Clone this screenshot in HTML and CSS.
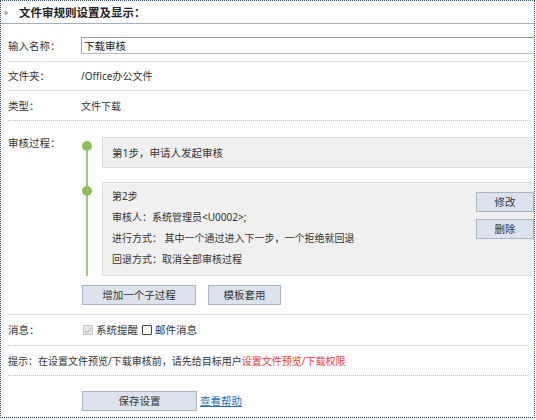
FILE: index.html
```html
<!DOCTYPE html>
<html lang="zh-CN">
<head>
<meta charset="utf-8">
<title>文件审规则设置及显示</title>
<link rel="stylesheet" href="styles.css">
</head>
<body>
<div class="panel">
  <div class="head"><span class="bullet"></span><h1 class="title">文件审规则设置及显示：</h1></div>

  <div class="row r-input">
    <div class="label">输入名称：</div>
    <div class="val"><input class="name" type="text" value="下载审核"></div>
  </div>

  <div class="row r-folder">
    <div class="label">文件夹：</div>
    <div class="val">/Office办公文件</div>
  </div>

  <div class="row r-type">
    <div class="label">类型：</div>
    <div class="val">文件下载</div>
  </div>

  <div class="row r-proc">
    <div class="label">审核过程：</div>
    <div class="val">
      <div class="steps">
        <div class="step">
          <span class="dot"></span>
          <div class="box box1">第1步，申请人发起审核</div>
        </div>
        <div class="step">
          <span class="dot"></span>
          <div class="box box2">
            <div class="info">
              <div>第2步</div>
              <div>审核人：系统管理员&lt;U0002&gt;;</div>
              <div>进行方式： 其中一个通过进入下一步，一个拒绝就回退</div>
              <div>回退方式：取消全部审核过程</div>
            </div>
            <div class="ops">
              <button class="btn b-op" type="button">修改</button>
              <button class="btn b-op" type="button">删除</button>
            </div>
          </div>
        </div>
      </div>
      <div class="acts">
        <button class="btn b-add" type="button">增加一个子过程</button>
        <button class="btn b-tpl" type="button">模板套用</button>
      </div>
    </div>
  </div>

  <div class="row r-msg">
    <div class="label">消息：</div>
    <div class="val checks">
      <label class="chk"><span class="cb cb-on"></span>系统提醒</label>
      <label class="chk"><span class="cb"></span>邮件消息</label>
    </div>
  </div>

  <div class="row r-tip">
    <div class="tip">提示：在设置文件预览/下载审核前，请先给目标用户<a class="red" href="#">设置文件预览/下载权限</a></div>
  </div>

  <div class="row r-save">
    <div class="label"></div>
    <div class="val save">
      <button class="btn b-save" type="button">保存设置</button>
      <a class="help" href="#">查看帮助</a>
    </div>
  </div>
</div>
</body>
</html>
```

FILE: styles.css
```css
* { box-sizing: border-box; }
html, body { margin: 0; padding: 0; background: #fff; }
body {
  font-family: "Noto Sans", "Noto Sans CJK SC", sans-serif;
  font-size: 10px;
  line-height: 14px;
  color: #333;
}
.panel {
  width: 535px;
  height: 418px;
  border: 1px dotted #3d5269;
  overflow: hidden;
}
.head {
  height: 23px;
  border-bottom: 1px solid #a3b0bc;
  display: flex;
  align-items: center;
  padding: 1px 0 0 3px;
}
.bullet {
  width: 4px;
  height: 4px;
  border-radius: 50%;
  background: #b4b4b4;
  margin-right: 11px;
}
.title {
  margin: 0;
  font-size: 11.5px;
  font-weight: bold;
  color: #222;
  line-height: 14px;
}
.row {
  display: grid;
  grid-template-columns: 73px 1fr;
  align-items: center;
  margin: 0 4px 0 7px;
  border-bottom: 1px dotted #c4c4c4;
}
.label { color: #333; font-size: 10.5px; }
.r-input { height: 38px; padding: 13px 0 7px; }
.r-folder { height: 29px; }
.r-type { height: 30px; }
.r-proc { height: 194px; align-items: start; }
.r-proc .label { padding-top: 15px; }
.r-proc .val { padding-top: 16px; }
.r-msg { height: 31px; }
.r-tip { height: 30px; display: flex; }
.r-save { height: 41px; border-bottom: none; align-items: start; }
.r-save .val { padding-top: 15px; }

.name {
  display: block;
  width: calc(100% + 10px);
  height: 17px;
  margin: 0;
  padding: 0 0 0 2px;
  border: 1px solid #bdbdbd;
  border-top-color: #9a9a9a;
  border-left-color: #a8a8a8;
  font: inherit;
  font-size: 10.5px;
  color: #222;
  outline: none;
}

.steps { position: relative; display: flex; flex-direction: column; gap: 14px; }
.steps::before {
  content: "";
  position: absolute;
  left: 5px;
  width: 2px;
  top: 9px;
  bottom: 0;
  background: #a3c878;
}
.step { display: flex; align-items: flex-start; }
.dot {
  position: relative;
  flex: none;
  width: 10px;
  height: 10px;
  border-radius: 50%;
  background: #8dbd5f;
  margin: 4px 10px 0 1px;
}
.box {
  flex: 1;
  margin-right: -10px;
  background: #f0f0f0;
  border: 1px solid #dcdcdc;
  color: #333;
}
.box1 { height: 31px; padding: 0 0 0 9px; display: flex; align-items: center; font-size: 10.5px; }
.box2 { height: 94px; display: flex; padding: 3px 5px 4px 9px; }
.info { flex: 1; line-height: 21px; }
.ops { display: flex; flex-direction: column; gap: 7px; margin-top: 6px; }

.btn {
  display: inline-flex;
  align-items: center;
  justify-content: center;
  height: 20px;
  margin: 0;
  padding: 0;
  background: #dce3ed;
  border: 1px solid #a8b5c7;
  border-radius: 0;
  font: inherit;
  font-size: 10.5px;
  color: #333;
}
.b-op { width: 58px; }
.acts { display: flex; gap: 12px; margin-top: 9px; padding-left: 1px; }
.b-add { width: 114px; }
.b-tpl { width: 73px; }

.checks { display: flex; align-items: center; gap: 4px; padding-left: 2px; }
.chk { display: inline-flex; align-items: center; gap: 3px; color: #333; font-size: 10.5px; }
.cb {
  width: 10px;
  height: 10px;
  border: 1px solid #444;
  background: #fff;
  border-radius: 1px;
  position: relative;
}
.cb-on { border-color: #c4c4c4; background: #e8e8e8; }
.cb-on::after {
  content: "";
  position: absolute;
  left: 2px;
  top: 0px;
  width: 3px;
  height: 6px;
  border: solid #b8b8b8;
  border-width: 0 1.5px 1.5px 0;
  transform: rotate(40deg);
}

.tip { align-self: center; }
.red { color: #e0403a; text-decoration: none; }
.save { display: flex; align-items: center; gap: 3px; }
.b-save { width: 115px; margin-left: 1px; }
.help { color: #2a6fba; text-decoration: underline; font-size: 10.5px; }
```
